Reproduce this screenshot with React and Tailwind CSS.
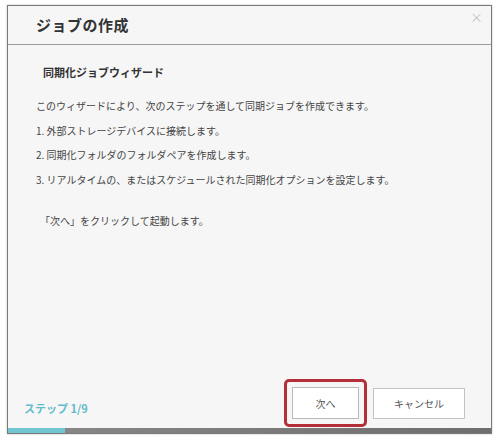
import React from 'react';

const steps = [
  '1. 外部ストレージデバイスに接続します。',
  '2. 同期化フォルダのフォルダペアを作成します。',
  '3. リアルタイムの、またはスケジュールされた同期化オプションを設定します。',
];

export default function App() {
  return (
    <div className="w-[496px] h-[437px] bg-white pt-[5px] pl-[7px] font-['Noto_Sans_CJK_JP','Noto_Sans',sans-serif]">
      <div className="w-[485px] h-[429px] flex flex-col bg-[#f6f6f6] border border-[#7a7a7a] shadow-[0_0_2px_rgba(0,0,0,0.25)]">
        {/* Header */}
        <div className="relative h-[39px] shrink-0 flex items-center pl-[28px] border-b border-[#9a9a9a]">
          <span className="text-[15px] font-bold text-[#333] tracking-[0.5px]">ジョブの作成</span>
          <span className="absolute right-[8px] top-[4px] text-[13px] leading-none text-[#c4c4c4]">×</span>
        </div>

        {/* Body */}
        <div className="flex-1 flex flex-col pl-[28px] pt-[19px] text-[#444]">
          <div className="text-[11px] font-bold text-[#333] pl-[7px] h-[16px] leading-[16px]">同期化ジョブウィザード</div>
          <div className="mt-[18px] flex flex-col gap-[8px] text-[10px] leading-[16.5px]">
            <div>このウィザードにより、次のステップを通して同期ジョブを作成できます。</div>
            {steps.map((s) => (
              <div key={s}>{s}</div>
            ))}
          </div>
          <div className="mt-[25px] pl-[4px] text-[10px] leading-[16px]">「次へ」をクリックして起動します。</div>
        </div>

        {/* Footer */}
        <div className="h-[50px] shrink-0 flex items-center justify-between pl-[16px] pr-[26px]">
          <span className="mt-[10px] text-[11px] font-bold text-[#63bccb]">ステップ 1/9</span>
          <div className="flex items-center gap-[6px]">
            <div className="p-[5px] border-[3px] border-[#b3303b] rounded-[5px]">
              <button className="w-[67px] h-[32px] bg-white border border-[#b9b9b9] text-[10px] text-[#555]">次へ</button>
            </div>
            <button className="w-[92px] h-[31px] bg-white border border-[#c4c4c4] text-[10px] text-[#555]">キャンセル</button>
          </div>
        </div>

        {/* Progress */}
        <div className="h-[5px] shrink-0 flex bg-gradient-to-r from-[#8a8a8a] to-[#6e6e6e]">
          <div className="w-[57px] h-full bg-[#72c6d2]"></div>
        </div>
      </div>
    </div>
  );
}
